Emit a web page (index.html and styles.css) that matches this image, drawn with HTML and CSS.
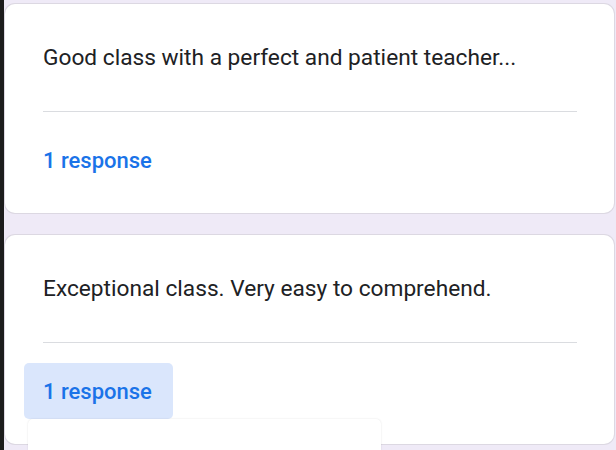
FILE: index.html
```html
<!DOCTYPE html>
<html>
<head>
<meta charset="utf-8">
<link rel="stylesheet" href="styles.css">
</head>
<body>
<div class="screen">
  <div class="edge"></div>
  <main class="list">
    <section class="card">
      <p class="answer">Good class with a perfect and patient teacher...</p>
      <hr class="divider">
      <div class="resp">1 response</div>
    </section>
    <section class="card">
      <p class="answer">Exceptional class. Very easy to comprehend.</p>
      <hr class="divider">
      <div class="resp-wrap">
        <div class="resp active">1 response</div>
        <div class="menu"></div>
      </div>
    </section>
  </main>
</div>
</body>
</html>
```
FILE: styles.css
```css
html, body {
  margin: 0;
  padding: 0;
  height: 100%;
  overflow: hidden;
  background: #efeaf7;
}
.screen {
  display: flex;
  height: 450px;
  overflow: hidden;
}
.edge {
  width: 4px;
  flex: none;
  background: #1c1c1c;
}
.list {
  flex: 1;
  padding: 4px 2px 0 1px;
  display: flex;
  flex-direction: column;
  gap: 22px;
}
.card {
  background: #fff;
  border-radius: 10px;
  box-shadow: 0 0 0 1px #dcd8e2;
  height: 209px;
  box-sizing: border-box;
  padding: 0 37px 0 19px;
  display: flex;
  flex-direction: column;
}
.answer {
  margin: 41px 0 0 19px;
  font-family: Roboto, "Noto Sans", sans-serif;
  font-size: 22.7px;
  line-height: 26px;
  color: #202124;
  white-space: nowrap;
}
.divider {
  margin: 40px 0 0 19px;
  border: 0;
  height: 1px;
  background: #dadce0;
}
.resp-wrap {
  position: relative;
  margin-top: 20px;
}
.resp {
  margin-top: 20px;
  width: 149px;
  height: 56px;
  box-sizing: border-box;
  padding-left: 19px;
  display: flex;
  align-items: center;
  border-radius: 5px;
  font-family: Roboto, "Noto Sans", sans-serif;
  font-weight: 500;
  font-size: 22px;
  color: #1a73e8;
  white-space: nowrap;
}
.resp-wrap .resp {
  margin-top: 0;
}
.resp.active {
  background: #dae6fc;
}
.menu {
  position: absolute;
  left: 4px;
  top: 56px;
  width: 353px;
  height: 31px;
  background: #fff;
  border-radius: 5px 5px 0 0;
  box-shadow: 0 0 2px rgba(0,0,0,0.12);
}
```
